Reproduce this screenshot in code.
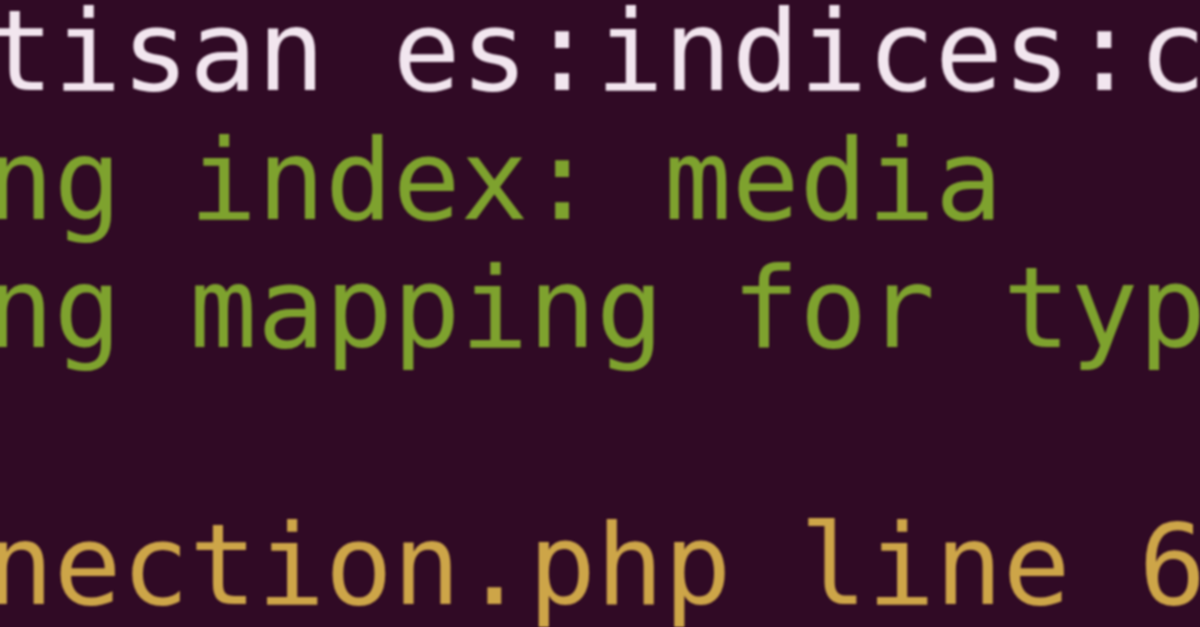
export default function App() {
  const lines = [
    { text: "tisan es:indices:c", cls: "text-[#f2e6ef]" },
    { text: "ng index: media", cls: "text-[#7ea22e]" },
    { text: "ng mapping for typ", cls: "text-[#7ea22e]" },
    { text: "\u00a0", cls: "text-[#7ea22e]" },
    { text: "nection.php line 6", cls: "text-[#cda548]" },
  ];
  return (
    <div className="w-[1200px] h-[627px] overflow-hidden bg-[#300a25]">
      <div
        className="-mt-[13px] -ml-[14px] text-[112.6px] leading-[128.5px] whitespace-pre blur-[1.2px]"
        style={{ fontFamily: '"DejaVu Sans Mono", monospace' }}
      >
        {lines.map((l, i) => (
          <div key={i} className={l.cls}>
            {l.text}
          </div>
        ))}
      </div>
    </div>
  );
}
